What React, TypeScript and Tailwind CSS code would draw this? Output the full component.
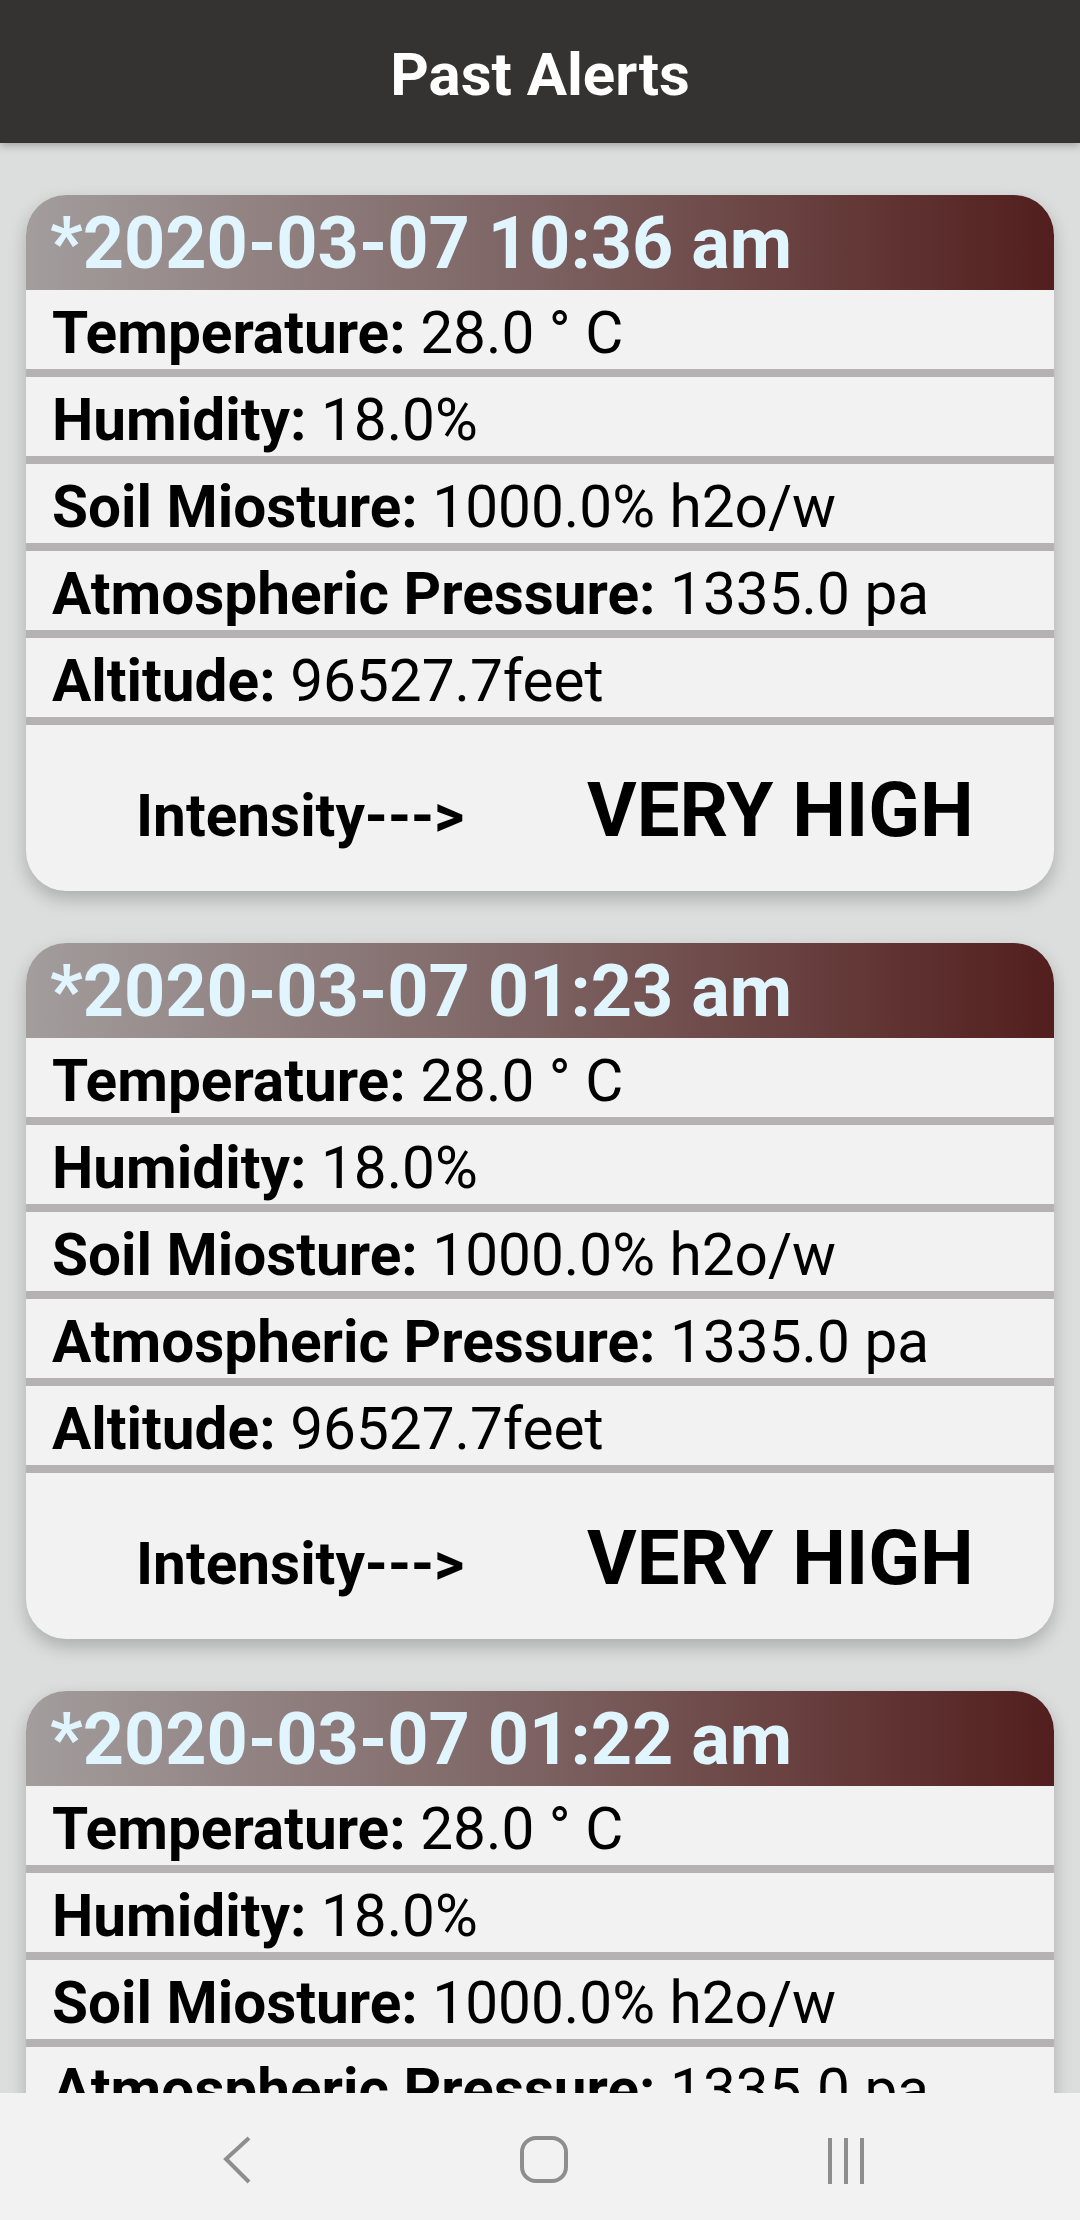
import React from "react";

type Alert = { date: string };

const alerts: Alert[] = [
  { date: "*2020-03-07 10:36 am" },
  { date: "*2020-03-07 01:23 am" },
  { date: "*2020-03-07 01:22 am" },
];

const rows: [string, string][] = [
  ["Temperature:", "28.0 ° C"],
  ["Humidity:", "18.0%"],
  ["Soil Miosture:", "1000.0% h2o/w"],
  ["Atmospheric Pressure:", "1335.0 pa"],
  ["Altitude:", "96527.7feet"],
];

function Card({ a }: { a: Alert }) {
  return (
    <div className="mx-[26px] shrink-0 overflow-hidden rounded-[40px] bg-[#f2f2f2] shadow-[0_8px_18px_rgba(0,0,0,0.22)]">
      <div className="h-[95px] bg-gradient-to-r from-[#a39d9d] via-[#7c6262] to-[#521e1e] pl-[24px] pt-[7px]">
        <div className="whitespace-nowrap text-[72px] font-bold leading-[84px] text-[#e1f5fe]">{a.date}</div>
      </div>
      {rows.map(([k, v]) => (
        <div key={k}>
          <div className="h-[79px] whitespace-nowrap pl-[26px] pt-[9px] text-[58.5px] leading-[68px] text-black">
            <span className="font-bold">{k}</span> {v}
          </div>
          <div className="h-[8px] bg-[#b4b2b2]" />
        </div>
      ))}
      <div className="flex h-[166px] items-baseline pt-[41px]">
        <div className="ml-[110px] w-[451px] whitespace-nowrap text-[58.5px] font-bold leading-[68px] text-black">Intensity---&gt;</div>
        <div className="whitespace-nowrap text-[76px] font-bold leading-[89px] text-black">VERY HIGH</div>
      </div>
    </div>
  );
}

export default function App() {
  return (
    <div
      className="flex h-[2220px] w-[1080px] flex-col overflow-hidden bg-[#dcdedd]"
      style={{ fontFamily: "Roboto, 'Noto Sans', sans-serif" }}
    >
      <div className="relative z-10 flex h-[143px] shrink-0 items-center justify-center bg-[#343331] pt-[6px] shadow-[0_3px_8px_rgba(0,0,0,0.25)]">
        <div className="text-[60px] font-bold leading-[70px] text-white">Past Alerts</div>
      </div>
      <div className="flex flex-1 flex-col gap-[52px] overflow-hidden pt-[52px]">
        {alerts.map((a) => (
          <Card key={a.date} a={a} />
        ))}
      </div>
      <div className="relative z-10 flex h-[127px] shrink-0 items-center bg-[#f2f2f2]">
        <svg className="absolute left-[221px] top-[42px]" width="32" height="50" viewBox="0 0 32 50">
          <path d="M28 3 L5 24 L28 47" fill="none" stroke="#8e8e8e" strokeWidth="4" strokeLinejoin="miter" />
        </svg>
        <svg className="absolute left-[518px] top-[42px]" width="52" height="50" viewBox="0 0 52 50">
          <rect x="4" y="3" width="44" height="43" rx="14" fill="none" stroke="#8e8e8e" strokeWidth="4" />
        </svg>
        <svg className="absolute left-[824px] top-[42px]" width="44" height="50" viewBox="0 0 44 50">
          <path d="M6 3 V49 M22 3 V49 M38 3 V49" fill="none" stroke="#8e8e8e" strokeWidth="4" />
        </svg>
      </div>
    </div>
  );
}
